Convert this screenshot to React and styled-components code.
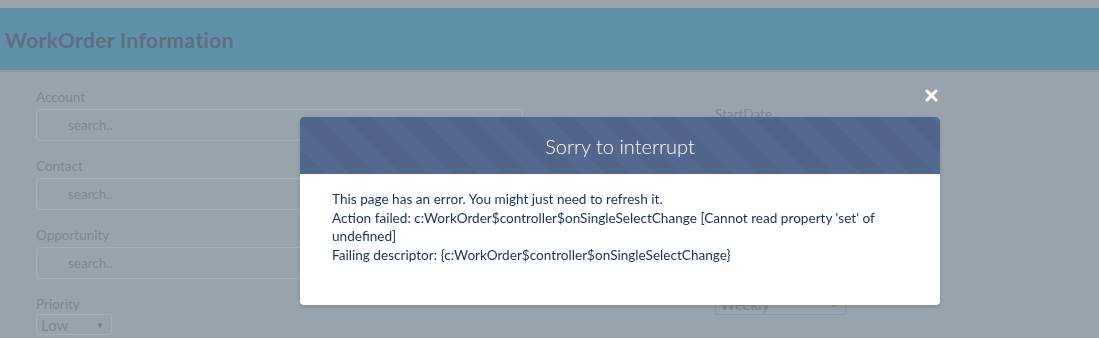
import React from 'react'
import styled, { createGlobalStyle } from 'styled-components';

const GlobalStyle = createGlobalStyle`
  html, body {
    margin: 0;
    padding: 0;
    background: #98a4ad;
    font-family: 'Lato', 'Open Sans', sans-serif;
    overflow: hidden;
  }
`;

// Whole dimmed page behind the modal
const Page = styled.div`
  width: 100%;
  height: 338px;
  background: #98a4ad;
`;

const TopStrip = styled.div`
  height: 8px;
  background: #9ba5ae;
`;

// Teal title band
const Header = styled.div`
  height: 62px;
  display: flex;
  align-items: center;
  padding-left: 5px;
  background: #6191a8;
  border-bottom: 2px solid #8f9ba5;
`;

const HeaderTitle = styled.h1`
  margin: 0;
  font-size: 21px;
  letter-spacing: 0.35px;
  font-weight: 700;
  color: #5e6e81;
`;

// Form area under the header
const Form = styled.div`
  display: grid;
  grid-template-columns: 487px 131px;
  column-gap: 192px;
  padding: 16px 0 0 36px;
`;

const Column = styled.div`
  display: flex;
  flex-direction: column;
  gap: 16px;
  padding-top: ${props => props.offset || 0}px;
`;

const Field = styled.div`
  display: flex;
  flex-direction: column;
  gap: ${props => props.tight ? 1 : 3}px;
  margin-top: ${props => props.push || 0}px;
`;

const Label = styled.label`
  font-size: 13.5px;
  line-height: 18px;
  color: #7a8794;
`;

const SearchBox = styled.div`
  height: 30px;
  border: 1px solid #a5afb8;
  border-radius: 4px;
  display: flex;
  align-items: center;
  padding-left: 31px;
  font-size: 13.5px;
  color: #7b8895;
`;

const Select = styled.div`
  width: ${props => props.width}px;
  height: ${props => props.height}px;
  box-sizing: border-box;
  border: 1px solid ${props => props.focused ? '#8797b0' : '#a5afb8'};
  border-radius: 2px;
  display: flex;
  align-items: center;
  justify-content: space-between;
  padding: 0 7px 0 4px;
  font-size: 15px;
  color: #7b8895;
`;

const Caret = styled.span`
  font-size: 8px;
  color: #6e7b88;
`;

// Error modal
const Modal = styled.div`
  position: fixed;
  left: 300px;
  top: 117px;
  width: 640px;
  border-radius: 4px;
  overflow: hidden;
  background: #fff;
  box-shadow: 0 2px 4px rgba(0, 0, 0, 0.16);
`;

const ModalHeader = styled.div`
  height: 57px;
  display: flex;
  align-items: center;
  justify-content: center;
  background-color: #54698f;
  background-image: repeating-linear-gradient(
    45deg,
    rgba(0, 0, 0, 0.035) 0 18px,
    rgba(255, 255, 255, 0) 18px 36px
  );
`;

const ModalTitle = styled.h2`
  margin: 0;
  font-size: 20px;
  font-weight: 300;
  color: #fff;
`;

const ModalBody = styled.div`
  padding: 16px 32px 40px 32px;
  font-size: 13.6px;
  line-height: 18.7px;
  color: #16325c;
`;

const CloseButton = styled.button`
  position: fixed;
  left: 925px;
  top: 89px;
  width: 13px;
  height: 13px;
  padding: 0;
  border: 0;
  background: none;
  display: flex;
`;

const App = () => {
  return (
    <>
      <GlobalStyle />
      <Page>
        <TopStrip />
        <Header>
          <HeaderTitle>WorkOrder Information</HeaderTitle>
        </Header>

        <Form>
          <Column>
            <Field>
              <Label>Account</Label>
              <SearchBox>search..</SearchBox>
            </Field>
            <Field>
              <Label>Contact</Label>
              <SearchBox>search..</SearchBox>
            </Field>
            <Field>
              <Label>Opportunity</Label>
              <SearchBox>search..</SearchBox>
            </Field>
            <Field tight>
              <Label>Priority</Label>
              <Select width={76} height={21}>Low <Caret>▼</Caret></Select>
            </Field>
          </Column>

          <Column offset={17}>
            <Field>
              <Label>StartDate</Label>
            </Field>
            <Field push={154}>
              <Select width={131} height={22} focused>Weekly <Caret>▼</Caret></Select>
            </Field>
          </Column>
        </Form>
      </Page>

      <CloseButton aria-label="close">
        <svg width="13" height="13" viewBox="0 0 13 13">
          <path d="M2 2 L11 11 M11 2 L2 11" stroke="#fff" strokeWidth="3" strokeLinecap="round" />
        </svg>
      </CloseButton>

      <Modal>
        <ModalHeader>
          <ModalTitle>Sorry to interrupt</ModalTitle>
        </ModalHeader>
        <ModalBody>
          This page has an error. You might just need to refresh it.<br />
          Action failed: c:WorkOrder$controller$onSingleSelectChange [Cannot read property 'set' of undefined]<br />
          Failing descriptor: {'{c:WorkOrder$controller$onSingleSelectChange}'}
        </ModalBody>
      </Modal>
    </>
  );
};

export default App;
